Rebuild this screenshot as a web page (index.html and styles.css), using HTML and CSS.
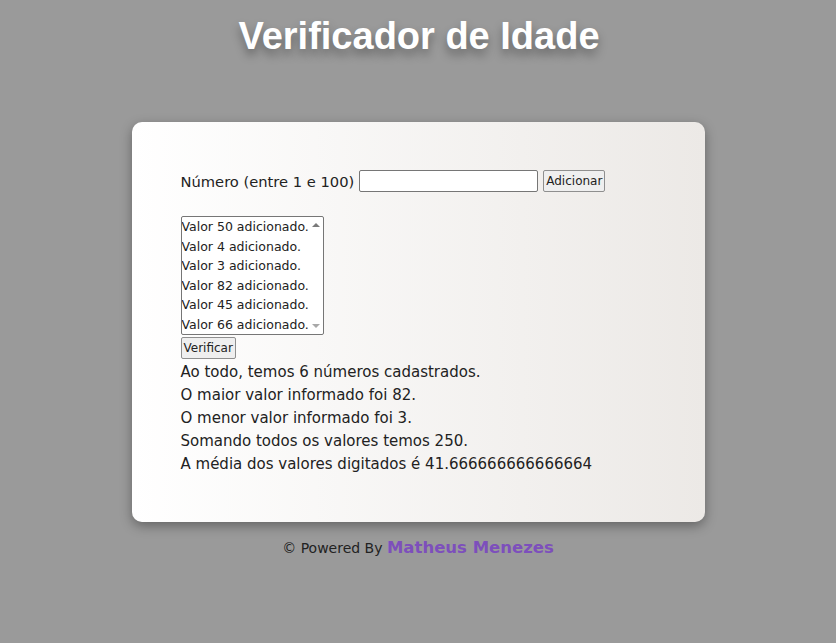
FILE: index.html
```html
<!DOCTYPE html>
<html lang="pt-BR">
<head>
<meta charset="UTF-8">
<title>Verificador de Idade</title>
<link rel="stylesheet" href="styles.css">
</head>
<body>
<header class="header">
  <h1 class="title">Verificador de Idade</h1>
</header>
<main class="card">
  <div class="form-row">
    <label class="label" for="num">Número (entre 1 e 100)</label>
    <input class="num-input" type="number" id="num">
    <button class="btn" type="button">Adicionar</button>
  </div>
  <div class="list-wrap">
    <select class="list" size="6">
      <option>Valor 50 adicionado.</option>
      <option>Valor 4 adicionado.</option>
      <option>Valor 3 adicionado.</option>
      <option>Valor 82 adicionado.</option>
      <option>Valor 45 adicionado.</option>
      <option>Valor 66 adicionado.</option>
      <option>Valor 66 adicionado.</option>
    </select>
    <span class="arrow arrow-up"></span>
    <span class="arrow arrow-down"></span>
  </div>
  <div><button class="btn" type="button">Verificar</button></div>
  <div class="results">
    <p>Ao todo, temos 6 números cadastrados.</p>
    <p>O maior valor informado foi 82.</p>
    <p>O menor valor informado foi 3.</p>
    <p>Somando todos os valores temos 250.</p>
    <p>A média dos valores digitados é 41.666666666666664</p>
  </div>
</main>
<footer class="footer">
  <p>&copy; Powered By <span class="author">Matheus Menezes</span></p>
</footer>
</body>
</html>
```
FILE: styles.css
```css
html, body {
  margin: 0;
  padding: 0;
}
body {
  background: #9a9a9a;
  font-family: "DejaVu Sans", Verdana, sans-serif;
  color: #222;
  min-height: 643px;
}
.header {
  display: flex;
  justify-content: center;
  padding-top: 14px;
}
.title {
  margin: 0 0 0 2px;
  font-family: "Liberation Sans", Arial, sans-serif;
  font-weight: bold;
  font-size: 38px;
  line-height: 44px;
  color: #ffffff;
  text-shadow: 0 6px 10px rgba(0, 0, 0, 0.35);
}
.card {
  width: 573px;
  box-sizing: border-box;
  margin: 64px auto 0;
  height: 400px;
  padding: 48px 48px 48px 49px;
  background: linear-gradient(to right, #ffffff, #ece9e6);
  border-radius: 10px;
  box-shadow: 0 4px 12px rgba(0, 0, 0, 0.35);
}
.form-row {
  display: flex;
  align-items: center;
  gap: 5px;
  margin-bottom: 24px;
}
.label {
  font-size: 14.7px;
}
.num-input {
  width: 179px;
  height: 22px;
  box-sizing: border-box;
  border: 1px solid #767676;
  border-radius: 2px;
  padding: 1px 2px;
  background: #fff;
}
.btn {
  font-family: "DejaVu Sans", Verdana, sans-serif;
  font-size: 12px;
  height: 22px;
  padding: 1px 2px;
  border: 1px solid #8f8f8f;
  border-radius: 2px;
  background: #efefef;
  color: #222;
}
.list-wrap {
  position: relative;
  width: 143px;
  margin-bottom: 2px;
}
.list {
  display: block;
  width: 143px;
  height: 119px;
  font-family: "DejaVu Sans", Verdana, sans-serif;
  font-size: 12.5px;
  border: 1px solid #767676;
  border-radius: 2px;
  color: #222;
  padding: 0;
  overflow: hidden;
  scrollbar-width: none;
  background: #fff;
}
.list::-webkit-scrollbar {
  display: none;
}
.list option {
  padding: 2px 0 2.5px 0;
}
.arrow {
  position: absolute;
  right: 4px;
  width: 0;
  height: 0;
  border-left: 4px solid transparent;
  border-right: 4px solid transparent;
}
.arrow-up {
  top: 7px;
  border-bottom: 4px solid #7a7a7a;
}
.arrow-down {
  bottom: 7px;
  border-top: 4px solid #a8a8a8;
}
.results {
  font-size: 15px;
  padding-top: 2px;
}
.results p {
  margin: 0;
  line-height: 23px;
}
.footer {
  display: flex;
  justify-content: center;
  font-size: 14px;
  color: #222;
}
.footer p {
  margin: 16px 0 0;
}
.author {
  color: #7d4fbc;
  font-size: 16.5px;
  font-weight: 600;
}
```
